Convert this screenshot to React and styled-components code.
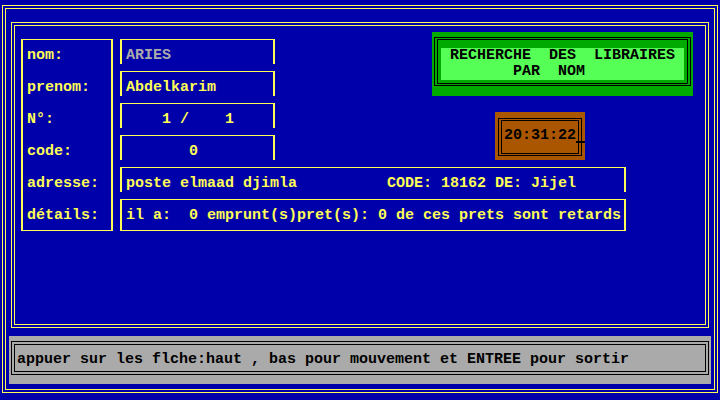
import React from "react";
import styled, { createGlobalStyle } from "styled-components";

const BLUE = "#0000aa";
const YELLOW = "#ffff55";
const GRAY = "#aaaaaa";

const GlobalStyle = createGlobalStyle`
  html, body {
    margin: 0;
    padding: 0;
    background: ${BLUE};
  }
`;

const Screen = styled.div`
  width: 720px;
  height: 400px;
  box-sizing: border-box;
  padding: 5px 0 0 2px;
  background: ${BLUE};
  color: ${YELLOW};
  font: bold 15px/16px "Liberation Mono", "DejaVu Sans Mono", monospace;
  white-space: pre;
  overflow: hidden;
`;

// double yellow line: 1px line, 2px gap, 1px line
const DoubleFrame = styled.div`
  box-sizing: border-box;
  border: 1px solid ${YELLOW};
  box-shadow: inset 0 0 0 2px ${BLUE}, inset 0 0 0 3px ${YELLOW};
`;

const OuterFrame = styled(DoubleFrame)`
  width: 716px;
  height: 388px;
  padding-top: 16px;
  display: flex;
  flex-direction: column;
  align-items: flex-start;
`;

const InnerFrame = styled(DoubleFrame)`
  width: 698px;
  height: 306px;
  margin-left: 8px;
  padding: 9px 0 0 9px;
  display: flex;
  align-items: flex-start;
  gap: 7px;
`;

const LabelBox = styled.div`
  width: 92px;
  box-sizing: border-box;
  margin-top: 7px;
  border: solid ${YELLOW};
  border-width: 1px 2px;
  padding: 8px 0 6px 4px;
  display: flex;
  flex-direction: column;
  gap: 16px;
`;

const Label = styled.div`
  height: 16px;
`;

const Fields = styled.div`
  display: flex;
  flex-direction: column;
  align-items: flex-start;
`;

const TopRow = styled.div`
  display: flex;
  align-items: flex-start;
`;

const ShortFields = styled.div`
  display: flex;
  flex-direction: column;
`;

const FieldBox = styled.div`
  box-sizing: border-box;
  width: ${(p) => (p.$wide ? 506 : 155)}px;
  margin-top: 7px;
  border: solid ${YELLOW};
  border-width: 1px 2px ${(p) => (p.$closed ? 1 : 0)}px;
  padding: 8px 0 ${(p) => (p.$closed ? 6 : 0)}px 4px;
  color: ${(p) => (p.$dim ? GRAY : YELLOW)};
  height: ${(p) => (p.$closed ? 32 : 25)}px;
`;

const SidePanel = styled.div`
  margin-left: 157px;
  display: flex;
  flex-direction: column;
  align-items: flex-start;
`;

const TitlePanel = styled.div`
  width: 261px;
  height: 64px;
  box-sizing: border-box;
  padding: 5px 2px 0;
  background: #00aa00;
`;

const BlackLine = styled.div`
  box-sizing: border-box;
  border: 1px solid #000;
  padding: ${(p) => p.$pad};
`;

const TitleText = styled.div`
  height: 32px;
  padding-left: 9px;
  background: #55ff55;
  color: #000;
`;

const Clock = styled.div`
  position: relative;
  width: 90px;
  height: 48px;
  box-sizing: border-box;
  margin: 16px 0 0 63px;
  padding: 6px 0 0 3px;
  background: #aa5500;
  color: #000;
`;

const Cursor = styled.span`
  position: absolute;
  left: 81px;
  top: 29px;
  width: 9px;
  height: 2px;
  background: #000;
`;

const StatusBar = styled.div`
  width: 702px;
  height: 48px;
  box-sizing: border-box;
  margin: 8px 0 0 6px;
  padding: 5px 0 0 2px;
  background: ${GRAY};
  color: #000;
`;

const labels = ["nom:", "prenom:", "N°:", "code:", "adresse:", "détails:"];

const shortValues = [
  { text: "ARIES", dim: true },
  { text: "Abdelkarim" },
  { text: "    1 /    1" },
  { text: "       0" },
];

export default function App() {
  return (
    <Screen>
      <GlobalStyle />
      <OuterFrame>
        <InnerFrame>
          <LabelBox>
            {labels.map((l) => (
              <Label key={l}>{l}</Label>
            ))}
          </LabelBox>
          <Fields>
            <TopRow>
              <ShortFields>
                {shortValues.map((v, i) => (
                  <FieldBox key={i} $dim={v.dim}>
                    {v.text}
                  </FieldBox>
                ))}
              </ShortFields>
              <SidePanel>
                <TitlePanel>
                  <BlackLine $pad="1px 2px">
                    <BlackLine $pad="8px 3px 3px">
                      <TitleText>
                        {"RECHERCHE  DES  LIBRAIRES\n       PAR  NOM"}
                      </TitleText>
                    </BlackLine>
                  </BlackLine>
                </TitlePanel>
                <Clock>
                  <BlackLine $pad="1px 2px" style={{ width: 84 }}>
                    <BlackLine $pad="7px 0 9px 2px">20:31:22</BlackLine>
                  </BlackLine>
                  <Cursor />
                </Clock>
              </SidePanel>
            </TopRow>
            <FieldBox $wide>
              {"poste elmaad djimla" + " ".repeat(10) + "CODE: 18162 DE: Jijel"}
            </FieldBox>
            <FieldBox $wide $closed>
              {"il a:  0 emprunt(s)pret(s): 0 de ces prets sont retards"}
            </FieldBox>
          </Fields>
        </InnerFrame>
        <StatusBar>
          <BlackLine $pad="2px" style={{ width: 698 }}>
            <BlackLine $pad="7px 0 3px 2px">
              appuer sur les flche:haut , bas pour mouvement et ENTREE pour sortir
            </BlackLine>
          </BlackLine>
        </StatusBar>
      </OuterFrame>
    </Screen>
  );
}
